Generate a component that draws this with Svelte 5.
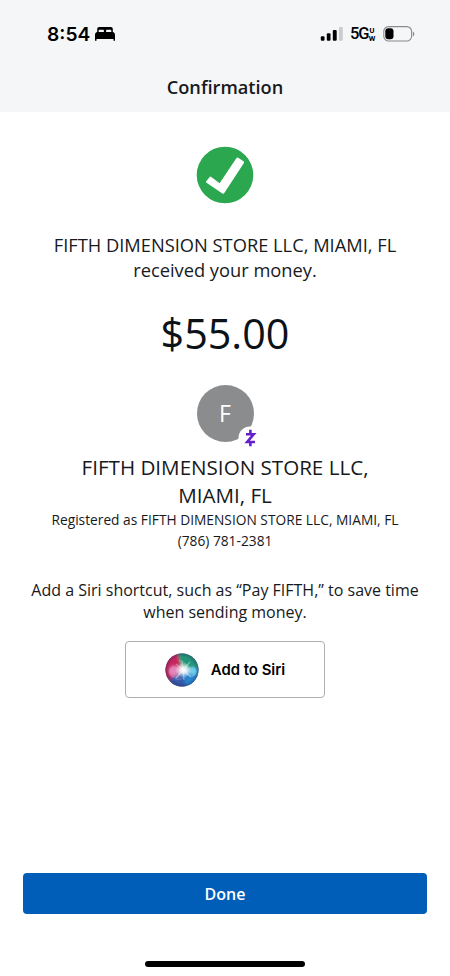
<script lang="ts">
  const recipient = 'FIFTH DIMENSION STORE LLC, MIAMI, FL';
  const amount = 55;
  const phone = '(786) 781-2381';

  const formatted = `$${amount.toFixed(2)}`;
  const initial = recipient[0];
  const shortName = recipient.split(' ')[0];
</script>

<div class="phone">
  <header>
    <div class="status">
      <div class="clock">
        <span>8:54</span>
        <svg width="20" height="14" viewBox="0 0 20 14" aria-hidden="true">
          <path d="M2.200 5V2.200C2.200.8 3 0 4.300 0h11.400c1.300 0 2.100.8 2.100 2.200V5h-1.500V3.700c0-.6-.4-1-1-1h-3.200c-.6 0-1 .4-1 1V5H8.900V3.700c0-.6-.4-1-1-1H4.700c-.6 0-1 .4-1 1V5z" />
          <path d="M0 13.800V8C0 6.500.9 5.100 2.200 5.100h15.600C19.100 5.100 20 6.500 20 8v5.800h-1.500v-1.700h-17v1.700z" />
        </svg>
      </div>
      <div class="indicators">
        <svg width="23" height="14" viewBox="0 0 23 14" aria-hidden="true">
          <rect x="0.800" y="9.200" width="3.700" height="4.600" rx="1" />
          <rect x="6.800" y="6.200" width="3.700" height="7.600" rx="1" />
          <rect x="12.800" y="3" width="3.900" height="10.800" rx="1" />
          <rect x="18.900" y="0" width="3.900" height="13.800" rx="1" fill="#cbccce" />
        </svg>
        <div class="network">
          <span class="gen">5G</span>
          <span class="uw"><i>U</i><i>W</i></span>
        </div>
        <svg width="32" height="16" viewBox="0 0 32 16" aria-hidden="true">
          <rect x="0.800" y="0.600" width="27.800" height="14.400" rx="4.800" fill="none" stroke="#898a8c" stroke-width="1.100" />
          <rect x="2.300" y="2.300" width="8.200" height="11" rx="3" />
          <path d="M29.900 5.500c1.900.9 1.900 4 0 4.900z" fill="#898a8c" />
        </svg>
      </div>
    </div>
    <h1>Confirmation</h1>
  </header>

  <main>
    <svg class="check" width="58" height="58" viewBox="0 0 58 58" aria-hidden="true">
      <circle cx="29" cy="29" r="28.300" fill="#2ba84f" />
      <path d="M10.200 35.200 13.500 31.200q.8-1 1.800-.3l8.300 6.300L40.500 12q.7-1 1.700-.3l5.300 3.500q1 .7.4 1.700L28.300 47q-.8 1.200-1.900.4L10.500 36.800q-1-.7-.3-1.600z" fill="#fff" />
    </svg>

    <p class="message">{recipient}<br />received your money.</p>
    <p class="amount">{formatted}</p>

    <div class="avatar">
      <span>{initial}</span>
      <svg class="zelle" width="24" height="24" viewBox="0 0 24 24" aria-hidden="true">
        <circle cx="12" cy="12" r="11.500" fill="#fff" />
        <path d="M12.400 3.800v4M12.400 16v4.200" stroke="#6420c8" stroke-width="2.600" />
        <path d="M8 8.200h7.800L9.200 16h7.800" fill="none" stroke="#6420c8" stroke-width="2.600" />
      </svg>
    </div>

    <h2>{recipient}</h2>
    <p class="details">Registered as {recipient}<br />{phone}</p>
    <p class="hint">Add a Siri shortcut, such as “Pay {shortName},” to save time<br />when sending money.</p>

    <button class="siri" type="button">
      <svg width="34" height="34" viewBox="0 0 34 34" aria-hidden="true">
        <defs>
          <clipPath id="orb"><circle cx="17" cy="17" r="16.500" /></clipPath>
          <radialGradient id="glow">
            <stop offset="0" stop-color="#fff" />
            <stop offset="0.350" stop-color="#fff" stop-opacity="0.850" />
            <stop offset="1" stop-color="#fff" stop-opacity="0" />
          </radialGradient>
          <radialGradient id="rim">
            <stop offset="0.750" stop-color="#202450" stop-opacity="0" />
            <stop offset="1" stop-color="#202450" stop-opacity="0.400" />
          </radialGradient>
          <filter id="soft" x="-50%" y="-50%" width="200%" height="200%">
            <feGaussianBlur stdDeviation="1.800" />
          </filter>
        </defs>
        <g clip-path="url(#orb)">
          <rect width="34" height="34" fill="#5a5398" />
          <g filter="url(#soft)">
            <path d="M17 17 10-2h28v18z" fill="#23967a" />
            <path d="M17 17 12-2-4 4v24l10 0z" fill="#c8285f" />
            <path d="M17 17 38 14v19L17 38z" fill="#2787cf" />
            <path d="M17 17 4 27l6 11h12z" fill="#3558a8" />
            <circle cx="9" cy="18" r="5" fill="#e276b5" />
            <circle cx="28" cy="18" r="4" fill="#58c9e8" />
          </g>
          <circle cx="17" cy="17" r="17" fill="url(#rim)" />
          <g fill="#fff" fill-opacity="0.120" stroke="#fff" stroke-opacity="0.250" stroke-width="0.600">
            <circle cx="10" cy="19" r="5.500" />
            <circle cx="26.500" cy="19" r="4.500" />
            <path d="M14 7c6 0 10 8 9 13-2 6-10 8-13 6 6-5 7-13 4-19z" />
          </g>
          <path d="M11 11l15 13M25 9 11 25M17 8l2 19" stroke="#fff" stroke-opacity="0.350" stroke-width="1.200" />
          <ellipse cx="18.500" cy="17" rx="8.500" ry="7.500" fill="url(#glow)" />
        </g>
      </svg>
      <span>Add to Siri</span>
    </button>
  </main>

  <footer>
    <button class="done" type="button">Done</button>
    <div class="home-bar"></div>
  </footer>
</div>

<style>
  :global(body) {
    background: #fff;
  }

  .phone {
    display: flex;
    flex-direction: column;
    width: 450px;
    height: 976px;
    overflow: hidden;
    background: #fff;
    color: #17191c;
    font-family: 'Open Sans', sans-serif;
    text-align: center;
  }

  h1,
  h2,
  p {
    margin: 0;
    font-weight: 400;
  }

  svg {
    display: block;
    flex: none;
  }

  header {
    flex: none;
    height: 112px;
    background: #f5f6f8;
  }

  .status {
    display: flex;
    justify-content: space-between;
    align-items: center;
    height: 67px;
    padding: 0 35px 0 47px;
    color: #000;
    font-family: Inter, sans-serif;
  }

  .clock,
  .indicators,
  .network {
    display: flex;
    align-items: center;
  }

  .clock {
    gap: 5px;
    font-size: 19.2px;
    font-weight: 600;
  }

  .indicators {
    gap: 7px;
  }

  .network {
    width: 26px;
    font-family: Roboto, sans-serif;
    font-size: 16.5px;
    font-weight: 500;
  }

  .gen {
    width: 18px;
    letter-spacing: -1.2px;
  }

  .uw {
    display: flex;
    flex-direction: column;
    width: 8px;
    font-size: 7.5px;
    font-weight: 700;
  }
  .uw i {
    height: 9px;
    font-style: normal;
    line-height: 9px;
  }
  .uw i + i {
    height: 7px;
    line-height: 7px;
  }

  h1 {
    font-size: 18.2px;
    font-weight: 600;
    line-height: 41px;
  }

  main {
    display: flex;
    flex: 1;
    flex-direction: column;
    align-items: center;
    padding-top: 34px;
  }

  .message {
    margin-top: 28px;
    font-size: 18.3px;
    line-height: 25px;
  }

  .amount {
    margin-top: 26px;
    color: #0b1218;
    font-size: 41.3px;
    line-height: 50px;
  }

  .avatar {
    position: relative;
    display: grid;
    place-items: center;
    width: 57px;
    height: 57px;
    margin-top: 27px;
    border-radius: 50%;
    background: #8b8c8e;
    color: #fff;
    font-size: 23px;
    line-height: 26px;
  }
  .avatar span {
    padding-bottom: 2px;
  }
  /* the payment badge overlaps the avatar's lower right edge */
  .zelle {
    position: absolute;
    right: -8px;
    bottom: -8px;
  }

  h2 {
    width: 310px;
    margin-top: 11px;
    font-size: 20.6px;
    line-height: 28px;
  }

  .details {
    margin-top: 1px;
    font-size: 13.75px;
    line-height: 20.5px;
  }

  .hint {
    margin-top: 28px;
    font-size: 16px;
    line-height: 22px;
    white-space: nowrap;
  }

  button {
    padding: 0;
    font: inherit;
  }

  .siri {
    display: flex;
    justify-content: center;
    align-items: center;
    gap: 12px;
    box-sizing: border-box;
    width: 200px;
    height: 57px;
    margin-top: 18px;
    border: 1px solid #aeafb1;
    border-radius: 4px;
    background: #fff;
    color: #000;
    font-family: Inter, sans-serif;
    font-size: 14.9px;
    font-weight: 600;
  }

  footer {
    display: flex;
    flex: none;
    flex-direction: column;
    align-items: center;
    height: 103px;
  }

  .done {
    width: 404px;
    height: 41px;
    border: 0;
    border-radius: 4px;
    background: #005eb8;
    color: #fff;
    font-size: 16px;
    font-weight: 600;
  }

  .home-bar {
    width: 160px;
    height: 6px;
    margin-top: 47px;
    border-radius: 3px;
    background: #000;
  }
</style>
